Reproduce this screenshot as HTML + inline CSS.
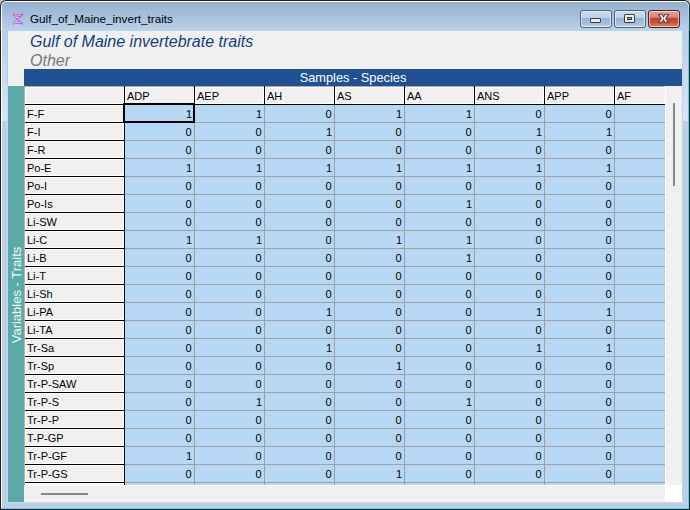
<!DOCTYPE html>
<html><head><meta charset="utf-8"><style>
*{margin:0;padding:0;box-sizing:border-box}
html,body{width:690px;height:510px;overflow:hidden}
body{position:relative;background:#c4c4c4;font-family:"Liberation Sans",sans-serif;}
.ab{position:absolute}
.t{position:absolute;white-space:nowrap;font-size:11px;line-height:11px;color:#000}
.rh{position:absolute;left:25px;width:99px;height:17px;background:#f0f0f0;border:1px solid #fff}
.ch{position:absolute;top:87px;height:17px;background:#f0f0f0;border:1px solid #fff}
.bl{position:absolute;background:#000}
.gl{position:absolute;background:#a0a0a0}
.d{position:absolute;width:60px;text-align:right;font-size:11px;line-height:11px;white-space:nowrap}
</style></head><body>

<div class="ab" style="left:0;top:0;width:690px;height:510px;background:#1e1e1e;border-radius:6px 6px 0 0"></div>
<div class="ab" style="left:1px;top:1px;width:688px;height:507px;background:#fff;border-radius:5px 5px 0 0"></div>
<div class="ab" style="left:1px;top:508px;width:688px;height:1px;background:#45dcf4"></div>
<div class="ab" style="left:4px;top:4px;width:685px;height:505px;background:linear-gradient(#a8e6f6 0px,#5ee0f6 28px,#45dcf4 40px)"></div>
<div class="ab" style="left:2px;top:2px;width:686px;height:506px;background:#bbd0e8;border-radius:4px 4px 0 0"></div>
<div class="ab" style="left:2px;top:2px;width:686px;height:29px;background:linear-gradient(#95b0cd,#b9d3ed);border-radius:4px 4px 0 0"></div>
<div class="ab" style="left:7px;top:86px;width:1px;height:417px;background:#c8d8ee"></div>
<div class="ab" style="left:7px;top:502px;width:676px;height:1px;background:#c4d8ee"></div>
<div class="ab" style="left:682px;top:31px;width:1px;height:472px;background:#c0d4ec"></div>
<div class="ab" style="left:7px;top:31px;width:1px;height:55px;background:#b2cae4"></div>
<div class="ab" style="left:687px;top:31px;width:1px;height:477px;background:#c8cde8"></div>
<div class="ab" style="left:2px;top:507px;width:686px;height:1px;background:#c8cde8"></div>
<div class="ab" style="left:683px;top:40px;width:5px;height:81px;background:linear-gradient(rgba(216,230,244,0),#d8e6f4)"></div>
<div class="ab" style="left:0;top:6px;width:1px;height:25px;background:linear-gradient(#2c2c2c,#555)"></div>
<div class="ab" style="left:689px;top:6px;width:1px;height:25px;background:linear-gradient(#2c2828,#4a3e3e)"></div>
<div class="ab" style="left:2px;top:40px;width:5px;height:81px;background:linear-gradient(rgba(216,230,244,0),#d8e6f4)"></div>
<svg class="ab" style="left:0;top:0" width="40" height="30" viewBox="0 0 40 30" shape-rendering="crispEdges"><g fill="#cc62e0"><rect x="13" y="13" width="1" height="1"/><rect x="13" y="14" width="1" height="1"/><rect x="13" y="15" width="1" height="1"/><rect x="13" y="22" width="1" height="1"/><rect x="13" y="23" width="1" height="1"/><rect x="13" y="24" width="1" height="1"/><rect x="14" y="15" width="1" height="1"/><rect x="14" y="16" width="1" height="1"/><rect x="14" y="21" width="1" height="1"/><rect x="15" y="14" width="1" height="1"/><rect x="15" y="17" width="1" height="1"/><rect x="15" y="20" width="1" height="1"/><rect x="15" y="23" width="1" height="1"/><rect x="16" y="14" width="1" height="1"/><rect x="16" y="18" width="1" height="1"/><rect x="16" y="19" width="1" height="1"/><rect x="16" y="23" width="1" height="1"/><rect x="17" y="14" width="1" height="1"/><rect x="17" y="16" width="1" height="1"/><rect x="17" y="18" width="1" height="1"/><rect x="17" y="19" width="1" height="1"/><rect x="17" y="21" width="1" height="1"/><rect x="17" y="23" width="1" height="1"/><rect x="18" y="14" width="1" height="1"/><rect x="18" y="16" width="1" height="1"/><rect x="18" y="19" width="1" height="1"/><rect x="18" y="21" width="1" height="1"/><rect x="18" y="23" width="1" height="1"/><rect x="19" y="14" width="1" height="1"/><rect x="19" y="16" width="1" height="1"/><rect x="19" y="17" width="1" height="1"/><rect x="19" y="20" width="1" height="1"/><rect x="19" y="21" width="1" height="1"/><rect x="19" y="23" width="1" height="1"/><rect x="20" y="14" width="1" height="1"/><rect x="20" y="16" width="1" height="1"/><rect x="20" y="17" width="1" height="1"/><rect x="20" y="21" width="1" height="1"/><rect x="20" y="23" width="1" height="1"/><rect x="21" y="14" width="1" height="1"/><rect x="21" y="15" width="1" height="1"/><rect x="21" y="16" width="1" height="1"/><rect x="21" y="22" width="1" height="1"/><rect x="21" y="23" width="1" height="1"/><rect x="22" y="13" width="1" height="1"/><rect x="22" y="14" width="1" height="1"/><rect x="22" y="15" width="1" height="1"/><rect x="22" y="22" width="1" height="1"/><rect x="22" y="23" width="1" height="1"/><rect x="22" y="24" width="1" height="1"/></g></svg>
<div class="t" style="left:30px;top:13px;font-size:11.7px;line-height:12px;color:#000">Gulf_of_Maine_invert_traits</div>
<div class="ab" style="left:580px;top:10px;width:32px;height:18px;border:1px solid #50607a;border-radius:3px;background:linear-gradient(#c9dcef 0%,#bcd3ea 40%,#97b5d3 44%,#a4c0dc 80%,#c0d6ec 100%);box-shadow:inset 0 0 0 1px rgba(255,255,255,.55)"></div>
<div class="ab" style="left:614px;top:10px;width:32px;height:18px;border:1px solid #50607a;border-radius:3px;background:linear-gradient(#c9dcef 0%,#bcd3ea 40%,#97b5d3 44%,#a4c0dc 80%,#c0d6ec 100%);box-shadow:inset 0 0 0 1px rgba(255,255,255,.55)"></div>
<div class="ab" style="left:648px;top:10px;width:32px;height:18px;border:1px solid #5a1b1b;border-radius:3px;background:linear-gradient(#e6a395 0%,#d8846f 40%,#c0442b 44%,#c65538 75%,#dc8f76 100%);box-shadow:inset 0 0 0 1px rgba(255,255,255,.55)"></div>
<div class="ab" style="left:590px;top:18px;width:11px;height:5px;background:#ececec;border:1px solid #3a3f4c;border-radius:1px"></div>
<div class="ab" style="left:624px;top:14px;width:11px;height:9px;background:#ececec;border:1px solid #3a3f4c;border-radius:1px"></div>
<div class="ab" style="left:627px;top:17px;width:5px;height:3px;background:#8fb0d4;border:1px solid #3a3f4c"></div>
<svg class="ab" style="left:648px;top:10px" width="32" height="18" viewBox="0 0 32 18">
<polygon points="10,4.2 14.3,4.2 15.5,6.3 16.7,4.2 21,4.2 18.3,8.4 21,12.6 16.7,12.6 15.5,10.5 14.3,12.6 10,12.6 12.7,8.4" fill="#404050" stroke="#404050" stroke-width="0.3" stroke-linejoin="round"/>
<polygon points="11.6,5.1 13.8,5.1 15.5,8.0 17.2,5.1 19.4,5.1 17.2,8.4 19.4,11.7 17.2,11.7 15.5,8.8 13.8,11.7 11.6,11.7 13.8,8.4" fill="#f2f2f2"/>
</svg>
<div class="ab" style="left:8px;top:31px;width:674px;height:471px;background:#f0f0f0"></div>
<div class="t" style="left:30px;top:34px;font-size:16px;line-height:16px;font-style:italic;color:#12407e">Gulf of Maine invertebrate traits</div>
<div class="t" style="left:30px;top:53px;font-size:16px;line-height:16px;font-style:italic;color:#787878">Other</div>
<div class="ab" style="left:24px;top:69px;width:658px;height:17px;background:#1f5193"></div>
<div class="t" style="left:24px;width:658px;text-align:center;top:71px;font-size:12.8px;line-height:13px;color:#fff">Samples - Species</div>
<div class="ab" style="left:8px;top:86px;width:16px;height:416px;background:#5baaa8"></div>
<div class="t" style="left:16px;top:295px;font-size:13px;line-height:13px;color:#eef8f6;transform:translate(-50%,-50%) rotate(-90deg)">Variables - Traits</div>
<div class="ab" style="left:24px;top:86px;width:641px;height:399px;background:#b7d8f5;overflow:hidden">
<div class="gl" style="left:170px;top:19px;width:1px;height:400px"></div>
<div class="gl" style="left:240px;top:19px;width:1px;height:400px"></div>
<div class="gl" style="left:310px;top:19px;width:1px;height:400px"></div>
<div class="gl" style="left:380px;top:19px;width:1px;height:400px"></div>
<div class="gl" style="left:450px;top:19px;width:1px;height:400px"></div>
<div class="gl" style="left:520px;top:19px;width:1px;height:400px"></div>
<div class="gl" style="left:590px;top:19px;width:1px;height:400px"></div>
<div class="gl" style="left:101px;top:36px;width:600px;height:1px"></div>
<div class="gl" style="left:101px;top:54px;width:600px;height:1px"></div>
<div class="gl" style="left:101px;top:72px;width:600px;height:1px"></div>
<div class="gl" style="left:101px;top:90px;width:600px;height:1px"></div>
<div class="gl" style="left:101px;top:108px;width:600px;height:1px"></div>
<div class="gl" style="left:101px;top:126px;width:600px;height:1px"></div>
<div class="gl" style="left:101px;top:144px;width:600px;height:1px"></div>
<div class="gl" style="left:101px;top:162px;width:600px;height:1px"></div>
<div class="gl" style="left:101px;top:180px;width:600px;height:1px"></div>
<div class="gl" style="left:101px;top:198px;width:600px;height:1px"></div>
<div class="gl" style="left:101px;top:216px;width:600px;height:1px"></div>
<div class="gl" style="left:101px;top:234px;width:600px;height:1px"></div>
<div class="gl" style="left:101px;top:252px;width:600px;height:1px"></div>
<div class="gl" style="left:101px;top:270px;width:600px;height:1px"></div>
<div class="gl" style="left:101px;top:288px;width:600px;height:1px"></div>
<div class="gl" style="left:101px;top:306px;width:600px;height:1px"></div>
<div class="gl" style="left:101px;top:324px;width:600px;height:1px"></div>
<div class="gl" style="left:101px;top:342px;width:600px;height:1px"></div>
<div class="gl" style="left:101px;top:360px;width:600px;height:1px"></div>
<div class="gl" style="left:101px;top:378px;width:600px;height:1px"></div>
<div class="gl" style="left:101px;top:396px;width:600px;height:1px"></div>
<div class="gl" style="left:101px;top:414px;width:600px;height:1px"></div>
<div class="ab" style="left:0;top:0;width:641px;height:18px;background:#f0f0f0"></div>
<div class="ab" style="left:0;top:0;width:100px;height:399px;background:#f0f0f0"></div>
<div class="ab" style="left:0;top:0;width:641px;height:1px;background:#b4b0ac"></div>
<div class="ab" style="left:0;top:0;width:1px;height:399px;background:#b4b0ac"></div>
<div class="ab" style="left:1px;top:1px;width:99px;height:17px;border:1px solid #fff"></div>
<div class="ab" style="left:101px;top:1px;width:69px;height:17px;border:1px solid #fff"></div>
<div class="t" style="left:103px;top:5px">ADP</div>
<div class="ab" style="left:171px;top:1px;width:69px;height:17px;border:1px solid #fff"></div>
<div class="t" style="left:173px;top:5px">AEP</div>
<div class="ab" style="left:241px;top:1px;width:69px;height:17px;border:1px solid #fff"></div>
<div class="t" style="left:243px;top:5px">AH</div>
<div class="ab" style="left:311px;top:1px;width:69px;height:17px;border:1px solid #fff"></div>
<div class="t" style="left:313px;top:5px">AS</div>
<div class="ab" style="left:381px;top:1px;width:69px;height:17px;border:1px solid #fff"></div>
<div class="t" style="left:383px;top:5px">AA</div>
<div class="ab" style="left:451px;top:1px;width:69px;height:17px;border:1px solid #fff"></div>
<div class="t" style="left:453px;top:5px">ANS</div>
<div class="ab" style="left:521px;top:1px;width:69px;height:17px;border:1px solid #fff"></div>
<div class="t" style="left:523px;top:5px">APP</div>
<div class="ab" style="left:591px;top:1px;width:69px;height:17px;border:1px solid #fff"></div>
<div class="t" style="left:593px;top:5px">AF</div>
<div class="ab" style="left:1px;top:19px;width:99px;height:17px;border:1px solid #fff"></div>
<div class="t" style="left:3px;top:23px">F-F</div>
<div class="d" style="left:101px;top:23px;width:67px">1</div>
<div class="d" style="left:171px;top:23px;width:67px">1</div>
<div class="d" style="left:241px;top:23px;width:66.5px">0</div>
<div class="d" style="left:311px;top:23px;width:67px">1</div>
<div class="d" style="left:381px;top:23px;width:67px">1</div>
<div class="d" style="left:451px;top:23px;width:66.5px">0</div>
<div class="d" style="left:521px;top:23px;width:66.5px">0</div>
<div class="ab" style="left:1px;top:37px;width:99px;height:17px;border:1px solid #fff"></div>
<div class="t" style="left:3px;top:41px">F-I</div>
<div class="d" style="left:101px;top:41px;width:66.5px">0</div>
<div class="d" style="left:171px;top:41px;width:66.5px">0</div>
<div class="d" style="left:241px;top:41px;width:67px">1</div>
<div class="d" style="left:311px;top:41px;width:66.5px">0</div>
<div class="d" style="left:381px;top:41px;width:66.5px">0</div>
<div class="d" style="left:451px;top:41px;width:67px">1</div>
<div class="d" style="left:521px;top:41px;width:67px">1</div>
<div class="ab" style="left:1px;top:55px;width:99px;height:17px;border:1px solid #fff"></div>
<div class="t" style="left:3px;top:59px">F-R</div>
<div class="d" style="left:101px;top:59px;width:66.5px">0</div>
<div class="d" style="left:171px;top:59px;width:66.5px">0</div>
<div class="d" style="left:241px;top:59px;width:66.5px">0</div>
<div class="d" style="left:311px;top:59px;width:66.5px">0</div>
<div class="d" style="left:381px;top:59px;width:66.5px">0</div>
<div class="d" style="left:451px;top:59px;width:66.5px">0</div>
<div class="d" style="left:521px;top:59px;width:66.5px">0</div>
<div class="ab" style="left:1px;top:73px;width:99px;height:17px;border:1px solid #fff"></div>
<div class="t" style="left:3px;top:77px">Po-E</div>
<div class="d" style="left:101px;top:77px;width:67px">1</div>
<div class="d" style="left:171px;top:77px;width:67px">1</div>
<div class="d" style="left:241px;top:77px;width:67px">1</div>
<div class="d" style="left:311px;top:77px;width:67px">1</div>
<div class="d" style="left:381px;top:77px;width:67px">1</div>
<div class="d" style="left:451px;top:77px;width:67px">1</div>
<div class="d" style="left:521px;top:77px;width:67px">1</div>
<div class="ab" style="left:1px;top:91px;width:99px;height:17px;border:1px solid #fff"></div>
<div class="t" style="left:3px;top:95px">Po-I</div>
<div class="d" style="left:101px;top:95px;width:66.5px">0</div>
<div class="d" style="left:171px;top:95px;width:66.5px">0</div>
<div class="d" style="left:241px;top:95px;width:66.5px">0</div>
<div class="d" style="left:311px;top:95px;width:66.5px">0</div>
<div class="d" style="left:381px;top:95px;width:66.5px">0</div>
<div class="d" style="left:451px;top:95px;width:66.5px">0</div>
<div class="d" style="left:521px;top:95px;width:66.5px">0</div>
<div class="ab" style="left:1px;top:109px;width:99px;height:17px;border:1px solid #fff"></div>
<div class="t" style="left:3px;top:113px">Po-Is</div>
<div class="d" style="left:101px;top:113px;width:66.5px">0</div>
<div class="d" style="left:171px;top:113px;width:66.5px">0</div>
<div class="d" style="left:241px;top:113px;width:66.5px">0</div>
<div class="d" style="left:311px;top:113px;width:66.5px">0</div>
<div class="d" style="left:381px;top:113px;width:67px">1</div>
<div class="d" style="left:451px;top:113px;width:66.5px">0</div>
<div class="d" style="left:521px;top:113px;width:66.5px">0</div>
<div class="ab" style="left:1px;top:127px;width:99px;height:17px;border:1px solid #fff"></div>
<div class="t" style="left:3px;top:131px">Li-SW</div>
<div class="d" style="left:101px;top:131px;width:66.5px">0</div>
<div class="d" style="left:171px;top:131px;width:66.5px">0</div>
<div class="d" style="left:241px;top:131px;width:66.5px">0</div>
<div class="d" style="left:311px;top:131px;width:66.5px">0</div>
<div class="d" style="left:381px;top:131px;width:66.5px">0</div>
<div class="d" style="left:451px;top:131px;width:66.5px">0</div>
<div class="d" style="left:521px;top:131px;width:66.5px">0</div>
<div class="ab" style="left:1px;top:145px;width:99px;height:17px;border:1px solid #fff"></div>
<div class="t" style="left:3px;top:149px">Li-C</div>
<div class="d" style="left:101px;top:149px;width:67px">1</div>
<div class="d" style="left:171px;top:149px;width:67px">1</div>
<div class="d" style="left:241px;top:149px;width:66.5px">0</div>
<div class="d" style="left:311px;top:149px;width:67px">1</div>
<div class="d" style="left:381px;top:149px;width:67px">1</div>
<div class="d" style="left:451px;top:149px;width:66.5px">0</div>
<div class="d" style="left:521px;top:149px;width:66.5px">0</div>
<div class="ab" style="left:1px;top:163px;width:99px;height:17px;border:1px solid #fff"></div>
<div class="t" style="left:3px;top:167px">Li-B</div>
<div class="d" style="left:101px;top:167px;width:66.5px">0</div>
<div class="d" style="left:171px;top:167px;width:66.5px">0</div>
<div class="d" style="left:241px;top:167px;width:66.5px">0</div>
<div class="d" style="left:311px;top:167px;width:66.5px">0</div>
<div class="d" style="left:381px;top:167px;width:67px">1</div>
<div class="d" style="left:451px;top:167px;width:66.5px">0</div>
<div class="d" style="left:521px;top:167px;width:66.5px">0</div>
<div class="ab" style="left:1px;top:181px;width:99px;height:17px;border:1px solid #fff"></div>
<div class="t" style="left:3px;top:185px">Li-T</div>
<div class="d" style="left:101px;top:185px;width:66.5px">0</div>
<div class="d" style="left:171px;top:185px;width:66.5px">0</div>
<div class="d" style="left:241px;top:185px;width:66.5px">0</div>
<div class="d" style="left:311px;top:185px;width:66.5px">0</div>
<div class="d" style="left:381px;top:185px;width:66.5px">0</div>
<div class="d" style="left:451px;top:185px;width:66.5px">0</div>
<div class="d" style="left:521px;top:185px;width:66.5px">0</div>
<div class="ab" style="left:1px;top:199px;width:99px;height:17px;border:1px solid #fff"></div>
<div class="t" style="left:3px;top:203px">Li-Sh</div>
<div class="d" style="left:101px;top:203px;width:66.5px">0</div>
<div class="d" style="left:171px;top:203px;width:66.5px">0</div>
<div class="d" style="left:241px;top:203px;width:66.5px">0</div>
<div class="d" style="left:311px;top:203px;width:66.5px">0</div>
<div class="d" style="left:381px;top:203px;width:66.5px">0</div>
<div class="d" style="left:451px;top:203px;width:66.5px">0</div>
<div class="d" style="left:521px;top:203px;width:66.5px">0</div>
<div class="ab" style="left:1px;top:217px;width:99px;height:17px;border:1px solid #fff"></div>
<div class="t" style="left:3px;top:221px">Li-PA</div>
<div class="d" style="left:101px;top:221px;width:66.5px">0</div>
<div class="d" style="left:171px;top:221px;width:66.5px">0</div>
<div class="d" style="left:241px;top:221px;width:67px">1</div>
<div class="d" style="left:311px;top:221px;width:66.5px">0</div>
<div class="d" style="left:381px;top:221px;width:66.5px">0</div>
<div class="d" style="left:451px;top:221px;width:67px">1</div>
<div class="d" style="left:521px;top:221px;width:67px">1</div>
<div class="ab" style="left:1px;top:235px;width:99px;height:17px;border:1px solid #fff"></div>
<div class="t" style="left:3px;top:239px">Li-TA</div>
<div class="d" style="left:101px;top:239px;width:66.5px">0</div>
<div class="d" style="left:171px;top:239px;width:66.5px">0</div>
<div class="d" style="left:241px;top:239px;width:66.5px">0</div>
<div class="d" style="left:311px;top:239px;width:66.5px">0</div>
<div class="d" style="left:381px;top:239px;width:66.5px">0</div>
<div class="d" style="left:451px;top:239px;width:66.5px">0</div>
<div class="d" style="left:521px;top:239px;width:66.5px">0</div>
<div class="ab" style="left:1px;top:253px;width:99px;height:17px;border:1px solid #fff"></div>
<div class="t" style="left:3px;top:257px">Tr-Sa</div>
<div class="d" style="left:101px;top:257px;width:66.5px">0</div>
<div class="d" style="left:171px;top:257px;width:66.5px">0</div>
<div class="d" style="left:241px;top:257px;width:67px">1</div>
<div class="d" style="left:311px;top:257px;width:66.5px">0</div>
<div class="d" style="left:381px;top:257px;width:66.5px">0</div>
<div class="d" style="left:451px;top:257px;width:67px">1</div>
<div class="d" style="left:521px;top:257px;width:67px">1</div>
<div class="ab" style="left:1px;top:271px;width:99px;height:17px;border:1px solid #fff"></div>
<div class="t" style="left:3px;top:275px">Tr-Sp</div>
<div class="d" style="left:101px;top:275px;width:66.5px">0</div>
<div class="d" style="left:171px;top:275px;width:66.5px">0</div>
<div class="d" style="left:241px;top:275px;width:66.5px">0</div>
<div class="d" style="left:311px;top:275px;width:67px">1</div>
<div class="d" style="left:381px;top:275px;width:66.5px">0</div>
<div class="d" style="left:451px;top:275px;width:66.5px">0</div>
<div class="d" style="left:521px;top:275px;width:66.5px">0</div>
<div class="ab" style="left:1px;top:289px;width:99px;height:17px;border:1px solid #fff"></div>
<div class="t" style="left:3px;top:293px">Tr-P-SAW</div>
<div class="d" style="left:101px;top:293px;width:66.5px">0</div>
<div class="d" style="left:171px;top:293px;width:66.5px">0</div>
<div class="d" style="left:241px;top:293px;width:66.5px">0</div>
<div class="d" style="left:311px;top:293px;width:66.5px">0</div>
<div class="d" style="left:381px;top:293px;width:66.5px">0</div>
<div class="d" style="left:451px;top:293px;width:66.5px">0</div>
<div class="d" style="left:521px;top:293px;width:66.5px">0</div>
<div class="ab" style="left:1px;top:307px;width:99px;height:17px;border:1px solid #fff"></div>
<div class="t" style="left:3px;top:311px">Tr-P-S</div>
<div class="d" style="left:101px;top:311px;width:66.5px">0</div>
<div class="d" style="left:171px;top:311px;width:67px">1</div>
<div class="d" style="left:241px;top:311px;width:66.5px">0</div>
<div class="d" style="left:311px;top:311px;width:66.5px">0</div>
<div class="d" style="left:381px;top:311px;width:67px">1</div>
<div class="d" style="left:451px;top:311px;width:66.5px">0</div>
<div class="d" style="left:521px;top:311px;width:66.5px">0</div>
<div class="ab" style="left:1px;top:325px;width:99px;height:17px;border:1px solid #fff"></div>
<div class="t" style="left:3px;top:329px">Tr-P-P</div>
<div class="d" style="left:101px;top:329px;width:66.5px">0</div>
<div class="d" style="left:171px;top:329px;width:66.5px">0</div>
<div class="d" style="left:241px;top:329px;width:66.5px">0</div>
<div class="d" style="left:311px;top:329px;width:66.5px">0</div>
<div class="d" style="left:381px;top:329px;width:66.5px">0</div>
<div class="d" style="left:451px;top:329px;width:66.5px">0</div>
<div class="d" style="left:521px;top:329px;width:66.5px">0</div>
<div class="ab" style="left:1px;top:343px;width:99px;height:17px;border:1px solid #fff"></div>
<div class="t" style="left:3px;top:347px">T-P-GP</div>
<div class="d" style="left:101px;top:347px;width:66.5px">0</div>
<div class="d" style="left:171px;top:347px;width:66.5px">0</div>
<div class="d" style="left:241px;top:347px;width:66.5px">0</div>
<div class="d" style="left:311px;top:347px;width:66.5px">0</div>
<div class="d" style="left:381px;top:347px;width:66.5px">0</div>
<div class="d" style="left:451px;top:347px;width:66.5px">0</div>
<div class="d" style="left:521px;top:347px;width:66.5px">0</div>
<div class="ab" style="left:1px;top:361px;width:99px;height:17px;border:1px solid #fff"></div>
<div class="t" style="left:3px;top:365px">Tr-P-GF</div>
<div class="d" style="left:101px;top:365px;width:67px">1</div>
<div class="d" style="left:171px;top:365px;width:66.5px">0</div>
<div class="d" style="left:241px;top:365px;width:66.5px">0</div>
<div class="d" style="left:311px;top:365px;width:66.5px">0</div>
<div class="d" style="left:381px;top:365px;width:66.5px">0</div>
<div class="d" style="left:451px;top:365px;width:66.5px">0</div>
<div class="d" style="left:521px;top:365px;width:66.5px">0</div>
<div class="ab" style="left:1px;top:379px;width:99px;height:17px;border:1px solid #fff"></div>
<div class="t" style="left:3px;top:383px">Tr-P-GS</div>
<div class="d" style="left:101px;top:383px;width:66.5px">0</div>
<div class="d" style="left:171px;top:383px;width:66.5px">0</div>
<div class="d" style="left:241px;top:383px;width:66.5px">0</div>
<div class="d" style="left:311px;top:383px;width:67px">1</div>
<div class="d" style="left:381px;top:383px;width:66.5px">0</div>
<div class="d" style="left:451px;top:383px;width:66.5px">0</div>
<div class="d" style="left:521px;top:383px;width:66.5px">0</div>
<div class="ab" style="left:1px;top:397px;width:99px;height:17px;border:1px solid #fff"></div>
<div class="bl" style="left:1px;top:18px;width:640px;height:1px"></div>
<div class="bl" style="left:100px;top:0;width:1px;height:399px"></div>
<div class="bl" style="left:1px;top:36px;width:99px;height:1px"></div>
<div class="bl" style="left:1px;top:54px;width:99px;height:1px"></div>
<div class="bl" style="left:1px;top:72px;width:99px;height:1px"></div>
<div class="bl" style="left:1px;top:90px;width:99px;height:1px"></div>
<div class="bl" style="left:1px;top:108px;width:99px;height:1px"></div>
<div class="bl" style="left:1px;top:126px;width:99px;height:1px"></div>
<div class="bl" style="left:1px;top:144px;width:99px;height:1px"></div>
<div class="bl" style="left:1px;top:162px;width:99px;height:1px"></div>
<div class="bl" style="left:1px;top:180px;width:99px;height:1px"></div>
<div class="bl" style="left:1px;top:198px;width:99px;height:1px"></div>
<div class="bl" style="left:1px;top:216px;width:99px;height:1px"></div>
<div class="bl" style="left:1px;top:234px;width:99px;height:1px"></div>
<div class="bl" style="left:1px;top:252px;width:99px;height:1px"></div>
<div class="bl" style="left:1px;top:270px;width:99px;height:1px"></div>
<div class="bl" style="left:1px;top:288px;width:99px;height:1px"></div>
<div class="bl" style="left:1px;top:306px;width:99px;height:1px"></div>
<div class="bl" style="left:1px;top:324px;width:99px;height:1px"></div>
<div class="bl" style="left:1px;top:342px;width:99px;height:1px"></div>
<div class="bl" style="left:1px;top:360px;width:99px;height:1px"></div>
<div class="bl" style="left:1px;top:378px;width:99px;height:1px"></div>
<div class="bl" style="left:1px;top:396px;width:99px;height:1px"></div>
<div class="bl" style="left:1px;top:414px;width:99px;height:1px"></div>
<div class="bl" style="left:170px;top:0;width:1px;height:18px"></div>
<div class="bl" style="left:240px;top:0;width:1px;height:18px"></div>
<div class="bl" style="left:310px;top:0;width:1px;height:18px"></div>
<div class="bl" style="left:380px;top:0;width:1px;height:18px"></div>
<div class="bl" style="left:450px;top:0;width:1px;height:18px"></div>
<div class="bl" style="left:520px;top:0;width:1px;height:18px"></div>
<div class="bl" style="left:590px;top:0;width:1px;height:18px"></div>
<div class="ab" style="left:99px;top:17px;width:72px;height:20px;border:2px solid #000"></div>
</div>
<div class="ab" style="left:665px;top:86px;width:17px;height:399px;background:#f0f0f0;border-left:1px solid #fff"></div>
<div class="ab" style="left:673px;top:103px;width:2px;height:83px;background:#878787"></div>
<div class="ab" style="left:24px;top:485px;width:641px;height:17px;background:#f0f0f0;border-top:1px solid #fff"></div>
<div class="ab" style="left:41px;top:493px;width:47px;height:2px;background:#878787"></div>
<div class="ab" style="left:665px;top:485px;width:17px;height:17px;background:#fff"></div>
</body></html>
